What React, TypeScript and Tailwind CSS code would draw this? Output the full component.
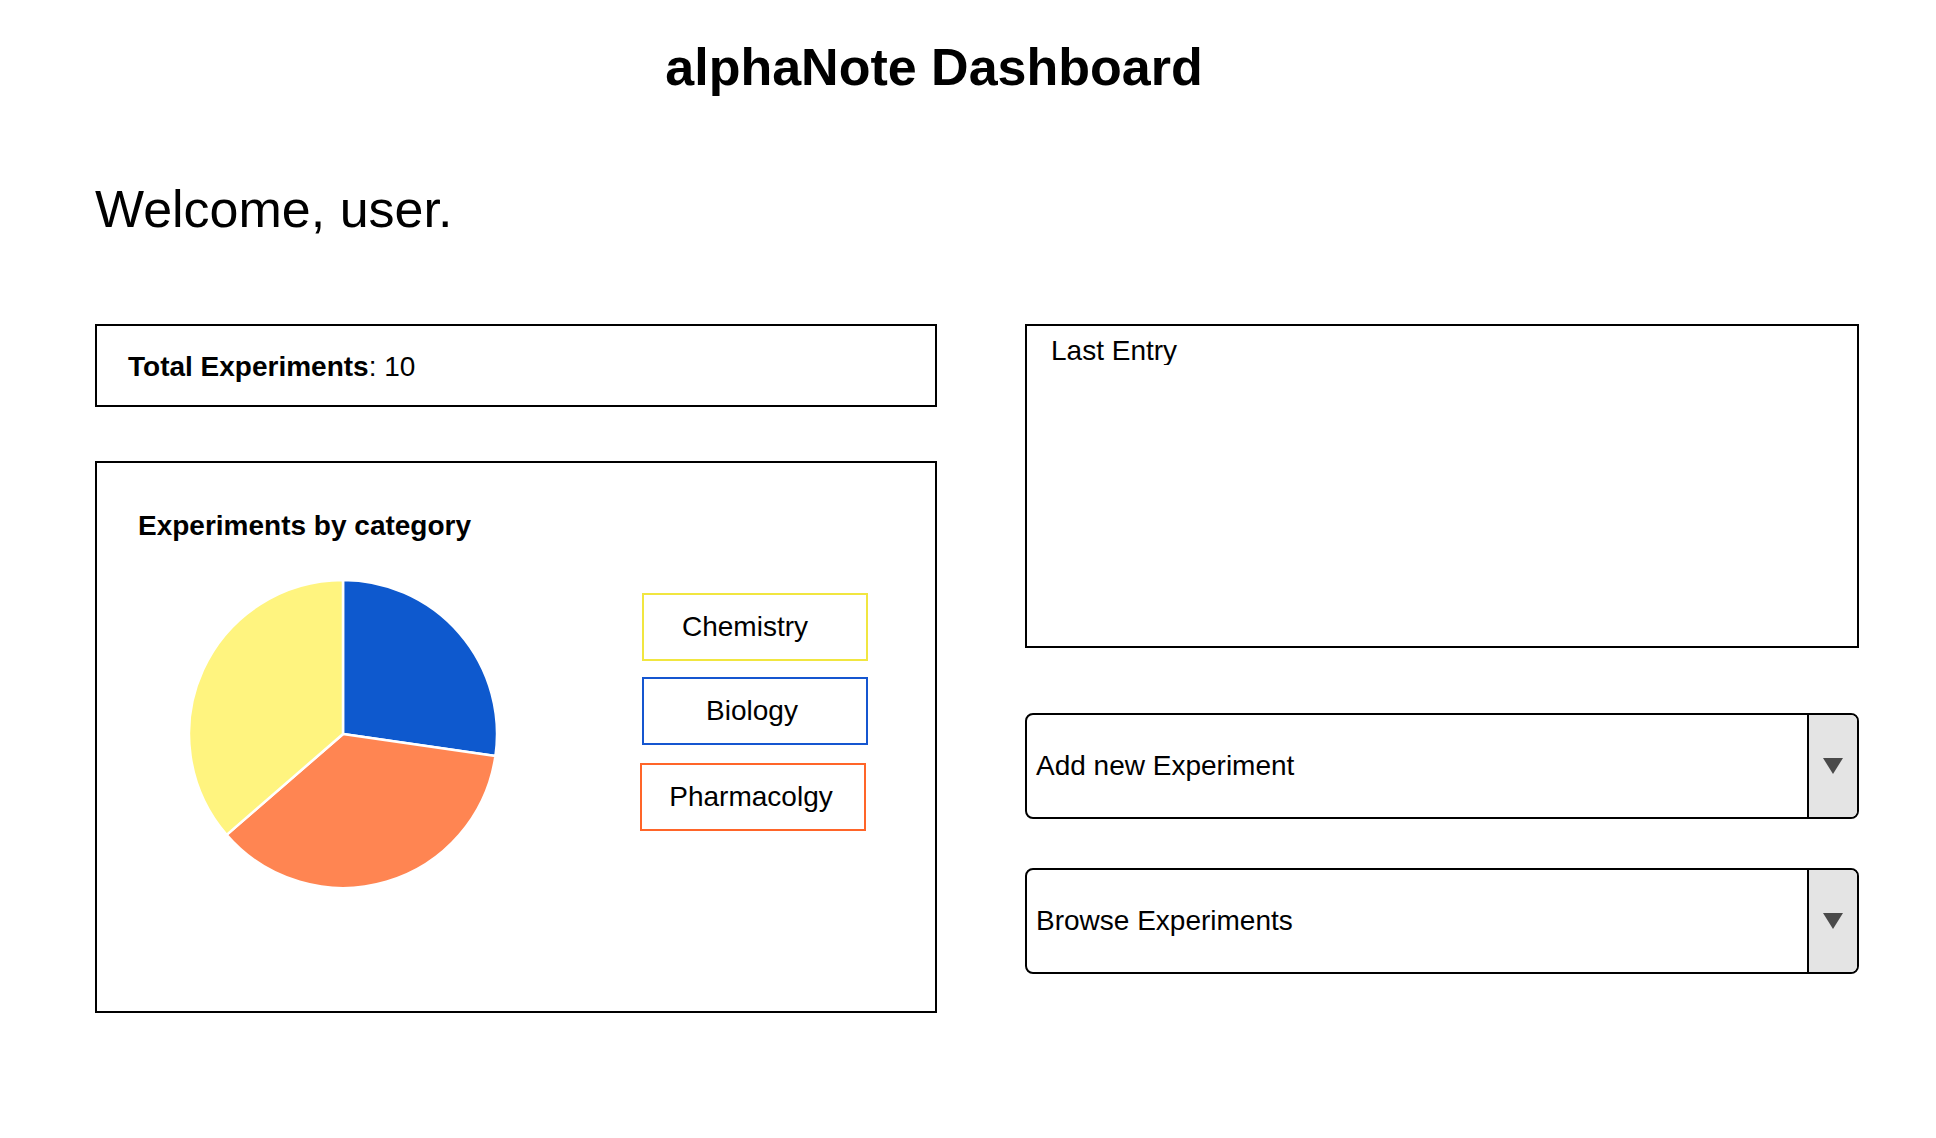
import React from 'react';

type Slice = { label: string; value: number; fill: string; border: string };

const slices: Slice[] = [
  { label: 'Biology', value: 3, fill: '#0e59ce', border: '#1556d0' },
  { label: 'Pharmacolgy', value: 4, fill: '#ff8552', border: '#ff6529' },
  { label: 'Chemistry', value: 4, fill: '#fff47f', border: '#f1e640' },
];

const PieChart: React.FC = () => {
  const size = 312;
  const c = size / 2;
  const r = 154;
  const total = slices.reduce((s, x) => s + x.value, 0);
  let start = 0;

  const point = (deg: number) => {
    const rad = (deg * Math.PI) / 180;
    return [c + r * Math.sin(rad), c - r * Math.cos(rad)];
  };

  return (
    <svg width={size} height={size} viewBox={`0 0 ${size} ${size}`}>
      {slices.map((s) => {
        const sweep = (s.value / total) * 360;
        const [x1, y1] = point(start);
        const [x2, y2] = point(start + sweep);
        const large = sweep > 180 ? 1 : 0;
        const d = `M ${c} ${c} L ${x1} ${y1} A ${r} ${r} 0 ${large} 1 ${x2} ${y2} Z`;
        start += sweep;
        return <path key={s.label} d={d} fill={s.fill} stroke="#ffffff" strokeWidth={2.5} strokeLinejoin="round" />;
      })}
    </svg>
  );
};

const Dropdown: React.FC<{ label: string }> = ({ label }) => (
  <div className="flex h-[106px] items-stretch rounded-[8px] border-2 border-black overflow-hidden">
    <div className="flex flex-1 items-center pl-[9px] text-[28px]">{label}</div>
    <div className="flex w-[50px] items-center justify-center border-l-2 border-black bg-[#e4e4e4]">
      <svg width="20" height="16" viewBox="0 0 20 16">
        <path d="M0 0 H20 L10 16 Z" fill="#4a4a4a" />
      </svg>
    </div>
  </div>
);

export default function App() {
  return (
    <div className="min-h-screen bg-white text-black font-['Liberation_Sans',Arial,sans-serif]">
      <h1 className="pt-[41px] pr-[68px] text-center text-[52px] font-bold leading-none">alphaNote Dashboard</h1>

      <p className="mt-[90px] pl-[95px] text-[52px] leading-none">Welcome, user.</p>

      <div className="mt-[89px] flex gap-[88px] pl-[95px]">
        {/* left column */}
        <div className="flex w-[842px] flex-col gap-[54px]">
          <div className="h-[83px] border-2 border-black pl-[31px] pt-[27px] text-[28px] leading-none">
            <span className="font-bold">Total Experiments</span>: 10
          </div>

          <div className="h-[552px] border-2 border-black pl-[41px] pt-[49px]">
            <h2 className="text-[28px] font-bold leading-none">Experiments by category</h2>
            <div className="mt-[38px] flex">
              <div className="ml-[49px]">
                <PieChart />
              </div>
              <div className="ml-[143px] mt-[15px] flex flex-col">
                <div className="flex h-[68px] w-[226px] items-center justify-center border-2 border-[#f1e640] pr-[20px] text-[28px]">
                  Chemistry
                </div>
                <div className="mt-[16px] flex h-[68px] w-[226px] items-center justify-center border-2 border-[#1556d0] pr-[6px] text-[28px]">
                  Biology
                </div>
                <div className="-ml-[2px] mt-[18px] flex h-[68px] w-[226px] items-center justify-center border-2 border-[#ff6529] pr-[4px] text-[28px]">
                  Pharmacolgy
                </div>
              </div>
            </div>
          </div>
        </div>

        {/* right column */}
        <div className="flex w-[834px] flex-col">
          <div className="h-[324px] border-2 border-black pl-[24px] pt-[11px]">
            <div className="h-[28px] overflow-hidden text-[28px] leading-none">Last Entry</div>
          </div>
          <div className="mt-[65px]">
            <Dropdown label="Add new Experiment" />
          </div>
          <div className="mt-[49px]">
            <Dropdown label="Browse Experiments" />
          </div>
        </div>
      </div>
    </div>
  );
}
